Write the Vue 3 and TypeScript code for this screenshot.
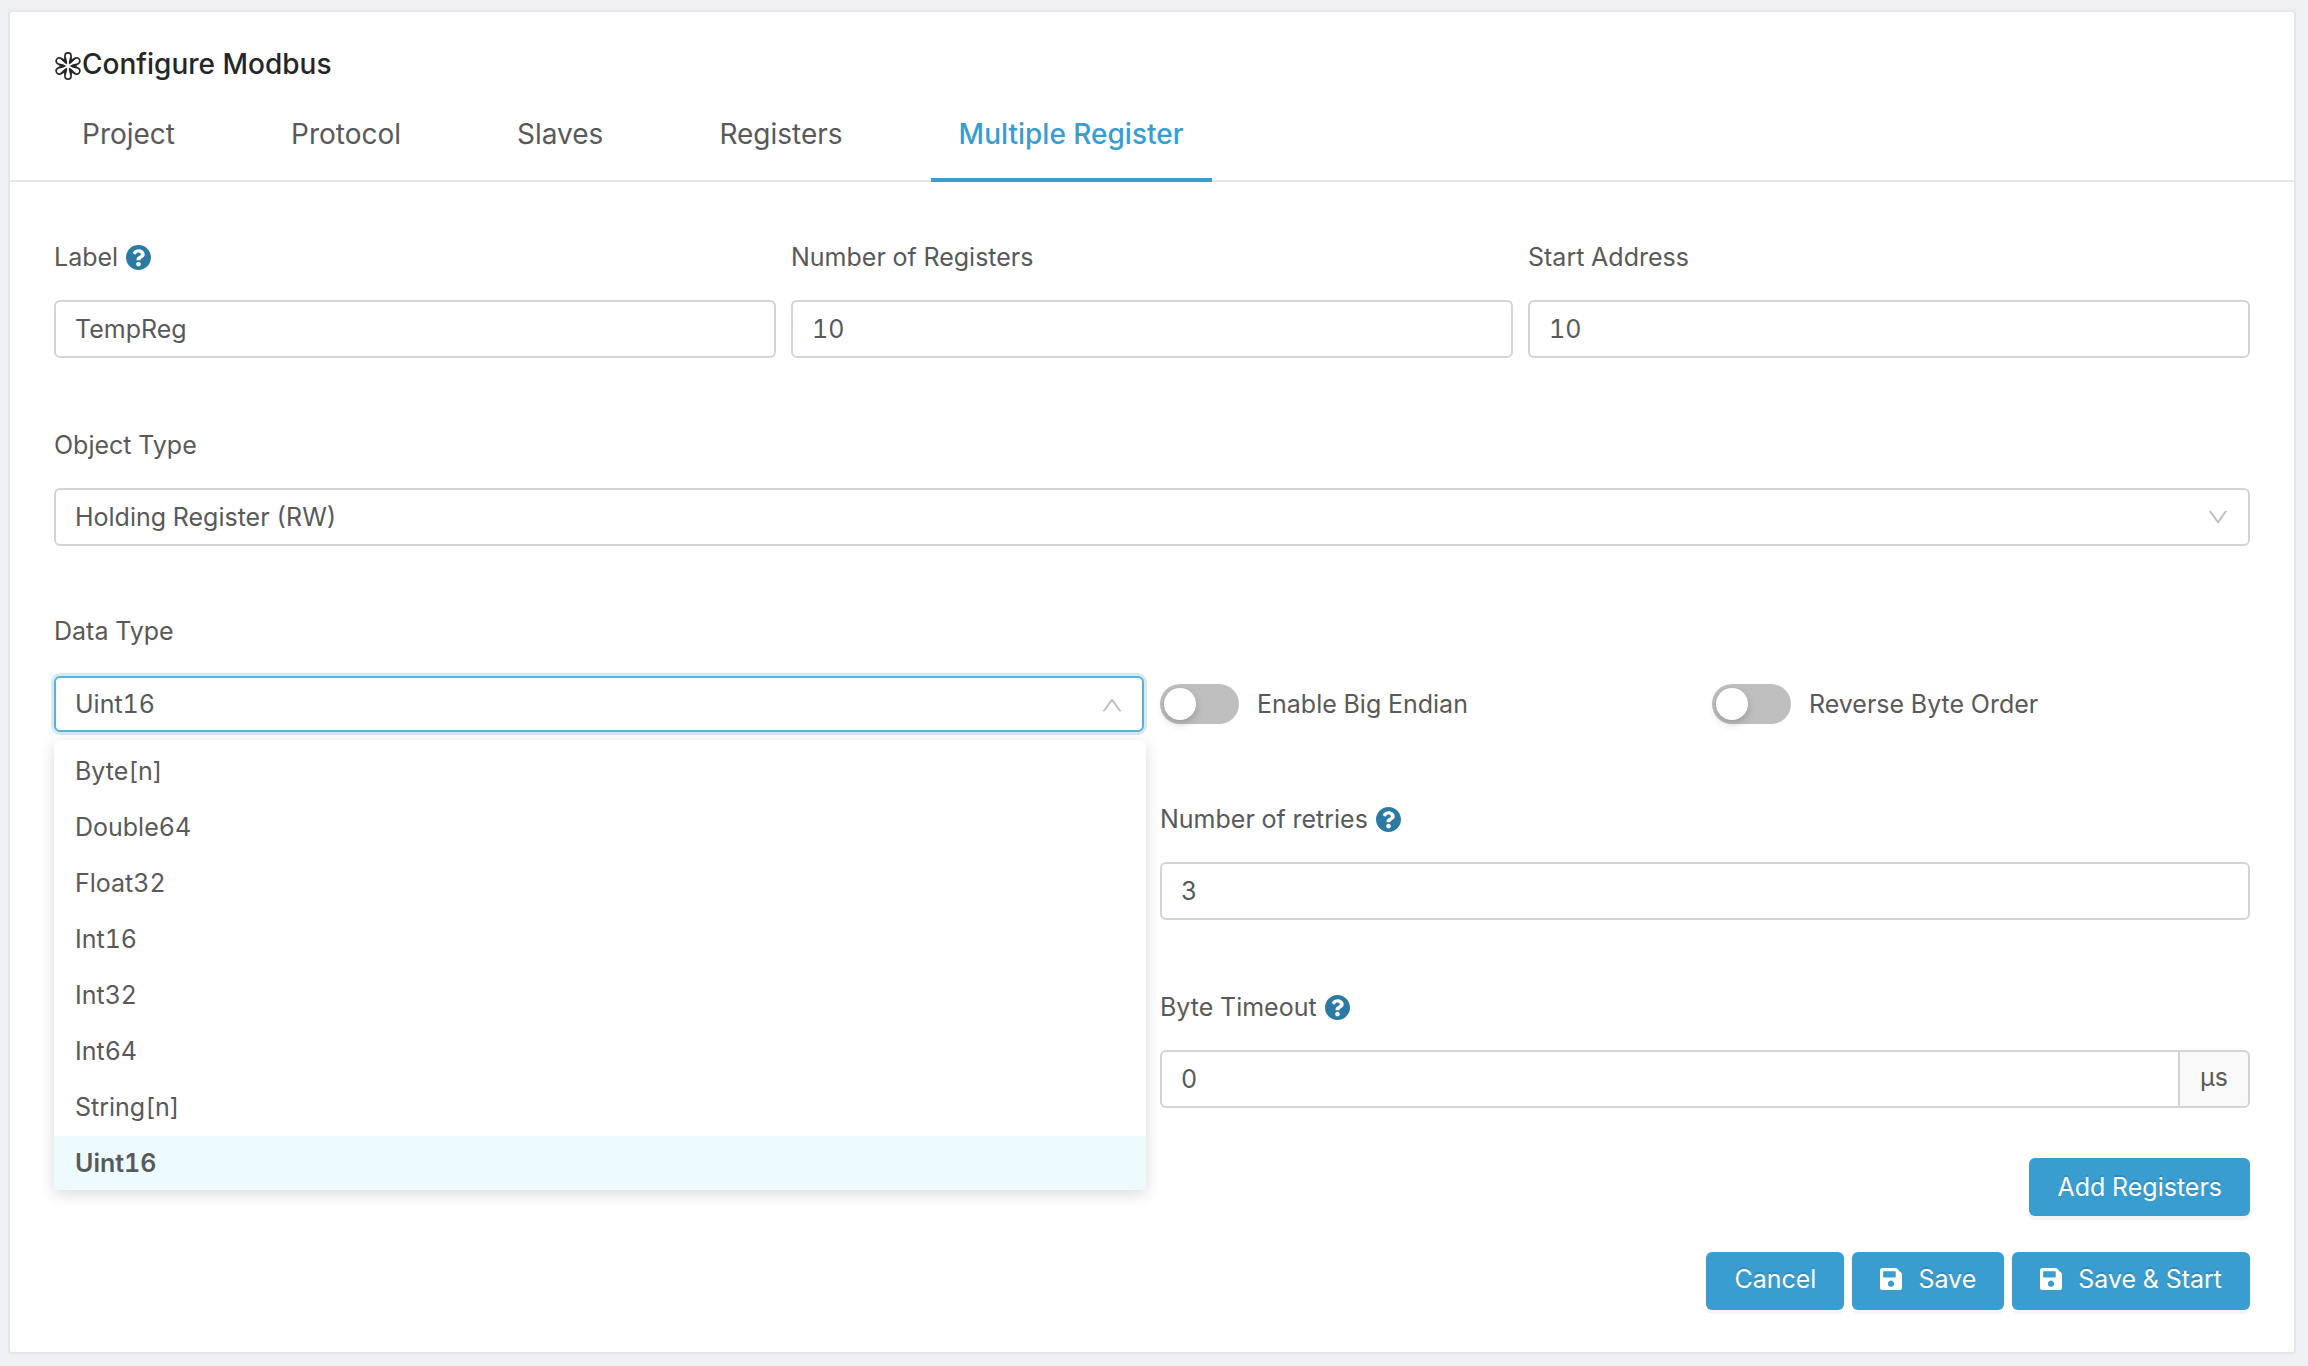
<script setup lang="ts">
import { ref } from 'vue'

const tabs = ['Project', 'Protocol', 'Slaves', 'Registers', 'Multiple Register']
const activeTab = ref('Multiple Register')

const dataTypes = ['Byte[n]', 'Double64', 'Float32', 'Int16', 'Int32', 'Int64', 'String[n]', 'Uint16']
const dataType = ref('Uint16')
const menuOpen = ref(true)

const label = ref('TempReg')
const registerCount = ref('10')
const startAddress = ref('10')
const objectType = ref('Holding Register (RW)')
const bigEndian = ref(false)
const reverseOrder = ref(false)
const retries = ref('3')
const byteTimeout = ref('0')

const petals = [0, 60, 120, 180, 240, 300]

const helpPath =
  'M504 256c0 136.997-111.043 248-248 248S8 392.997 8 256C8 119.083 119.043 8 256 8s248 111.083 248 248zM262.655 90c-54.497 0-89.255 22.957-116.549 63.758-3.536 5.286-2.353 12.415 2.715 16.258l34.699 26.31c5.205 3.947 12.621 3.008 16.665-2.122 17.864-22.658 30.113-35.797 57.303-35.797 20.429 0 45.698 13.148 45.698 32.958 0 14.976-12.363 22.667-32.534 33.976C247.128 238.528 216 254.941 216 296v4c0 6.627 5.373 12 12 12h56c6.627 0 12-5.373 12-12v-1.333c0-28.462 83.186-29.647 83.186-106.667 0-58.002-60.165-102-116.531-102zM256 338c-25.365 0-46 20.635-46 46 0 25.364 20.635 46 46 46s46-20.636 46-46c0-25.365-20.635-46-46-46z'
const savePath =
  'M433.941 129.941l-83.882-83.882A48 48 0 0 0 316.118 32H48C21.49 32 0 53.49 0 80v352c0 26.51 21.49 48 48 48h352c26.51 0 48-21.49 48-48V163.882a48 48 0 0 0-14.059-33.941zM224 416c-35.346 0-64-28.654-64-64 0-35.346 28.654-64 64-64s64 28.654 64 64c0 35.346-28.654 64-64 64zm96-304.52V212c0 6.627-5.373 12-12 12H76c-6.627 0-12-5.373-12-12V108c0-6.627 5.373-12 12-12h228.52c3.183 0 6.235 1.264 8.485 3.515l3.48 3.48A11.996 11.996 0 0 1 320 111.48z'
const chevronPath =
  'M884 256h-75c-5.1 0-9.9 2.5-12.9 6.6L512 654.2 227.9 262.6c-3-4.1-7.8-6.6-12.9-6.6h-75c-6.5 0-10.3 7.4-6.5 12.7l352.6 486.1c12.8 17.6 39 17.6 51.7 0l352.6-486.1c3.9-5.3.1-12.7-6.4-12.7z'

function pick(type: string) {
  dataType.value = type
  menuOpen.value = false
}
</script>

<template>
  <main class="card">
    <header class="head">
      <h1 class="title">
        <svg class="flower" viewBox="-14 -14 28 28" aria-hidden="true">
          <g v-for="a in petals" :key="'o' + a" :transform="`rotate(${a})`">
            <path d="M0 0V-10" stroke="#262626" stroke-width="7.8" stroke-linecap="round" />
          </g>
          <g v-for="a in petals" :key="'i' + a" :transform="`rotate(${a})`">
            <path d="M-.9 0L-.9 -4.5L-2.2 -9.4A2.3 2.3 0 1 1 2.2 -9.4L.9 -4.5L.9 0Z" fill="#fff" />
          </g>
        </svg>
        <span>Configure Modbus</span>
      </h1>
      <nav class="tabs">
        <button
          v-for="t in tabs"
          :key="t"
          type="button"
          class="tab"
          :class="{ active: t === activeTab }"
          @click="activeTab = t"
        >{{ t }}</button>
      </nav>
    </header>

    <form class="form" @submit.prevent>
      <div class="row three">
        <div class="field">
          <div class="caption">
            <label for="label">Label</label>
            <svg class="help" viewBox="8 8 496 496" aria-hidden="true"><path :d="helpPath" /></svg>
          </div>
          <input id="label" v-model="label" class="box" type="text" />
        </div>
        <div class="field">
          <div class="caption"><label for="count">Number of Registers</label></div>
          <input id="count" v-model="registerCount" class="box" type="text" />
        </div>
        <div class="field">
          <div class="caption"><label for="start">Start Address</label></div>
          <input id="start" v-model="startAddress" class="box" type="text" />
        </div>
      </div>

      <div class="row object">
        <div class="field">
          <div class="caption"><label for="object">Object Type</label></div>
          <div class="picker">
            <select id="object" v-model="objectType" class="box">
              <option>Holding Register (RW)</option>
            </select>
            <svg class="chevron" viewBox="64 64 896 896" aria-hidden="true"><path :d="chevronPath" /></svg>
          </div>
        </div>
      </div>

      <div class="row two types">
        <div class="field">
          <div class="caption"><label for="datatype">Data Type</label></div>
          <div class="picker" :class="{ open: menuOpen }">
            <select id="datatype" v-model="dataType" class="box" @mousedown.prevent="menuOpen = !menuOpen">
              <option v-for="d in dataTypes" :key="d">{{ d }}</option>
            </select>
            <svg class="chevron" viewBox="64 64 896 896" aria-hidden="true"><path :d="chevronPath" /></svg>
            <ul v-if="menuOpen" class="menu" role="listbox" aria-label="Data Type">
              <li
                v-for="d in dataTypes"
                :key="d"
                role="option"
                :aria-selected="d === dataType"
                class="item"
                :class="{ selected: d === dataType }"
                @click="pick(d)"
              >{{ d }}</li>
            </ul>
          </div>
        </div>
        <div class="switches">
          <label class="switch"><input v-model="bigEndian" type="checkbox" /><span>Enable Big Endian</span></label>
          <label class="switch"><input v-model="reverseOrder" type="checkbox" /><span>Reverse Byte Order</span></label>
        </div>
      </div>

      <div class="row two">
        <div class="field second">
          <div class="caption">
            <label for="retries">Number of retries</label>
            <svg class="help" viewBox="8 8 496 496" aria-hidden="true"><path :d="helpPath" /></svg>
          </div>
          <input id="retries" v-model="retries" class="box" type="text" />
        </div>
      </div>

      <div class="row two">
        <div class="field second">
          <div class="caption">
            <label for="timeout">Byte Timeout</label>
            <svg class="help" viewBox="8 8 496 496" aria-hidden="true"><path :d="helpPath" /></svg>
          </div>
          <div class="group">
            <input id="timeout" v-model="byteTimeout" class="box" type="text" />
            <span class="addon">µs</span>
          </div>
        </div>
      </div>

      <div class="actions add">
        <button type="button" class="btn">Add Registers</button>
      </div>
      <div class="actions final">
        <button type="button" class="btn">Cancel</button>
        <button type="button" class="btn">
          <svg class="disk" viewBox="0 32 448 448" aria-hidden="true"><path :d="savePath" /></svg>Save
        </button>
        <button type="button" class="btn">
          <svg class="disk" viewBox="0 32 448 448" aria-hidden="true"><path :d="savePath" /></svg>Save &amp; Start
        </button>
      </div>
    </form>
  </main>
</template>

<style>
body {
  background: #eef0f4;
  overflow-x: hidden;
}
</style>

<style scoped>
* {
  box-sizing: border-box;
}
.card {
  margin: 10px 12px 12px 8px;
  border: 2px solid #e5e6e8;
  border-radius: 4px;
  background: #fff;
  color: #595959;
  font-family: Inter, 'Liberation Sans', sans-serif;
  font-size: 25px;
  font-variant-numeric: tabular-nums;
  line-height: 34px;
}
.head {
  padding: 30px 44px 0;
  border-bottom: 2px solid #e6e6e6;
}
.title {
  display: flex;
  align-items: center;
  margin: 0;
  color: #262626;
  font-size: 28px;
  font-weight: 500;
  line-height: 44px;
}
.flower {
  width: 28px;
  height: 28px;
  margin-top: 4px;
  fill: none;
}
.tabs {
  display: flex;
  gap: 60px;
  margin-top: 26px;
  margin-bottom: -2px;
}
.tab {
  padding: 0 28px 22px;
  border: 0;
  border-bottom: 4px solid transparent;
  background: none;
  color: inherit;
  font-family: inherit;
  font-size: 28px;
  line-height: 44px;
}
.tab.active {
  border-bottom-color: #399dcf;
  color: #399dcf;
  font-weight: 500;
}
.form {
  padding: 58px 44px 42px;
}
.row {
  display: grid;
  margin-bottom: 70px;
}
.object {
  margin-bottom: 68px;
}
.three {
  grid-template-columns: repeat(3, 1fr);
  gap: 15px;
}
.two {
  grid-template-columns: repeat(2, 1fr);
  gap: 16px;
}
.second {
  grid-column: 2;
}
.caption {
  display: flex;
  align-items: center;
  gap: 8px;
  margin-bottom: 26px;
}
.types .caption {
  margin-bottom: 28px;
}
.help {
  width: 25px;
  height: 25px;
  fill: #2b7aa2;
}
.box {
  display: block;
  width: 100%;
  height: 58px;
  margin: 0;
  padding: 0 19px;
  border: 2px solid #d4d4d4;
  border-radius: 6px;
  outline: 0;
  background: #fff;
  color: inherit;
  font: inherit;
  font-variant-numeric: tabular-nums;
  appearance: none;
}
.types .box {
  height: 56px;
}
.picker {
  position: relative;
}
.chevron {
  position: absolute;
  top: 18px;
  right: 21px;
  width: 22px;
  height: 22px;
  fill: #bfbfbf;
  pointer-events: none;
}
.open .box {
  border-color: #52b5dc;
  box-shadow: 0 0 0 3px #d6e9f2;
}
.open .chevron {
  transform: rotate(180deg);
}
.menu {
  position: absolute;
  z-index: 1;
  top: 64px;
  left: 0;
  right: -2px;
  margin: 0;
  padding: 4px 0 0;
  border-radius: 6px 6px 0 0;
  background: #fff;
  box-shadow: 0 4px 16px rgba(0, 0, 0, 0.15);
  list-style: none;
}
.item {
  padding: 0 21px 2px;
  line-height: 54px;
}
.item:last-child {
  padding-bottom: 0;
}
.item.selected {
  background: #edfbff;
  font-weight: 600;
}
.switches {
  display: grid;
  grid-template-columns: repeat(2, 1fr);
  align-self: end;
  gap: 14px;
}
.switch {
  display: flex;
  align-items: center;
  gap: 18px;
  height: 56px;
}
.switch input {
  width: 79px;
  height: 40px;
  margin: 0;
  padding: 4px;
  border-radius: 20px;
  background: #bfbfbf;
  appearance: none;
}
.switch input::before {
  content: '';
  display: block;
  width: 32px;
  height: 32px;
  border-radius: 50%;
  background: #fff;
  box-shadow: 0 4px 8px rgba(0, 35, 11, 0.2);
}
.switch input:checked {
  background: #399dcf;
}
.group {
  display: flex;
}
.group .box {
  flex: 1;
  border-right: 0;
  border-radius: 6px 0 0 6px;
}
.addon {
  width: 72px;
  border: 2px solid #d4d4d4;
  border-radius: 0 6px 6px 0;
  background: #f9f9f9;
  line-height: 50px;
  text-align: center;
}
.actions {
  display: flex;
  justify-content: flex-end;
  gap: 8px;
}
.add {
  margin: -20px 0 36px;
}
.btn {
  display: flex;
  align-items: center;
  height: 58px;
  padding: 0 28px;
  border: 0;
  border-radius: 6px;
  background: #399dcf;
  box-shadow: 0 4px 0 rgba(0, 0, 0, 0.04);
  color: #fff;
  font: inherit;
  text-shadow: 0 -2px 0 rgba(0, 0, 0, 0.12);
}
.final .btn {
  padding-bottom: 4px;
}
.disk {
  width: 22px;
  height: 22px;
  margin-right: 16px;
  fill: #fff;
}
</style>
